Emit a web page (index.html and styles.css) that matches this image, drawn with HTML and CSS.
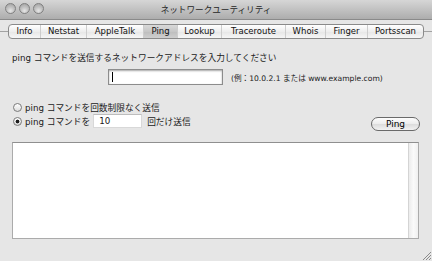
FILE: index.html
```html
<!DOCTYPE html>
<html lang="ja">
<head>
<meta charset="utf-8">
<title>ネットワークユーティリティ</title>
<link rel="stylesheet" href="styles.css">
</head>
<body>
<div class="window">
  <div class="titlebar">
    <div class="lights">
      <span class="light"></span><span class="light"></span><span class="light"></span>
    </div>
    <div class="title">ネットワークユーティリティ</div>
    <div></div>
  </div>
  <div class="tabrow">
    <div class="tabs">
      <div class="tab t-info">Info</div>
      <div class="tab t-netstat">Netstat</div>
      <div class="tab t-apple">AppleTalk</div>
      <div class="tab t-ping active">Ping</div>
      <div class="tab t-lookup">Lookup</div>
      <div class="tab t-trace">Traceroute</div>
      <div class="tab t-whois">Whois</div>
      <div class="tab t-finger">Finger</div>
      <div class="tab t-port">Portsscan</div>
    </div>
  </div>
  <div class="prompt">ping コマンドを送信するネットワークアドレスを入力してください</div>
  <div class="addr-row">
    <div class="addr"><span class="caret"></span></div>
    <div class="hint">(例：10.0.2.1 または www.example.com)</div>
  </div>
  <div class="options">
    <div class="radios">
      <div class="radio-row"><span class="radio"></span>ping コマンドを回数制限なく送信</div>
      <div class="radio-row"><span class="radio on"></span>ping コマンドを<span class="count">10</span>回だけ送信</div>
    </div>
    <div class="ping-btn">Ping</div>
  </div>
  <div class="output">
    <div class="scroll"></div>
  </div>
  <svg class="grip" width="9" height="9" viewBox="0 0 9 9">
    <path d="M1 9 L9 1 M4 9 L9 4 M7 9 L9 7" stroke="#8a8a8a" stroke-width="1"/>
  </svg>
</div>
</body>
</html>
```
FILE: styles.css
```css
* { box-sizing: border-box; }
body {
  margin: 0;
  width: 432px;
  height: 261px;
  overflow: hidden;
  background: #e6e6e6;
  font-family: "DejaVu Sans", "Noto Sans CJK JP", sans-serif;
  font-size: 8.7px;
  color: #1a1a1a;
}
.window {
  position: relative;
  height: 261px;
  display: flex;
  flex-direction: column;
}
.titlebar {
  flex: none;
  height: 20px;
  display: grid;
  grid-template-columns: 1fr auto 1fr;
  align-items: center;
  background: linear-gradient(#d6d6d6, #adadad);
  border-bottom: 1px solid #8a8a8a;
}
.lights {
  display: flex;
  gap: 3px;
  padding-left: 5px;
  padding-bottom: 2px;
}
.light {
  width: 11px;
  height: 11px;
  border-radius: 50%;
  border: 1px solid #808080;
  background: radial-gradient(circle at 50% 75%, #e6e6e6 0, #c2c2c2 45%, #9d9d9d 100%);
}
.title {
  font-family: "Noto Sans CJK JP", sans-serif;
  font-size: 8.6px;
  color: #262626;
  padding-bottom: 2px;
}
.tabrow {
  position: relative;
  margin-top: 4px;
  padding-left: 8px;
  height: 15px;
  display: flex;
}
.tabrow::before {
  content: "";
  position: absolute;
  left: 0;
  right: 0;
  top: 7px;
  height: 1px;
  background: #a2a2a2;
}
.tabs {
  position: relative;
  z-index: 1;
  display: flex;
  height: 15px;
  border: 1px solid #8a8a8a;
  border-radius: 4px;
  overflow: hidden;
  background: linear-gradient(#ffffff, #eeeeee 50%, #e6e6e6 51%, #f6f6f6);
}
.tab {
  font-size: 8.5px;
  line-height: 13px;
  text-align: center;
  color: #111;
  border-left: 1px solid #cdcdcd;
}
.tab:first-child { border-left: none; }
.tab.active { background: linear-gradient(#d9d9d9, #c6c6c6 50%, #bdbdbd 51%, #cfcfcf); }
.t-info { width: 31px; }
.t-netstat { width: 46px; }
.t-apple { width: 57px; }
.t-ping { width: 34px; }
.t-lookup { width: 44px; }
.t-trace { width: 64px; }
.t-whois { width: 40px; }
.t-finger { width: 42px; }
.t-port { width: 56px; }
.prompt {
  margin: 13px 0 0 12px;
  line-height: 12px;
}
.addr-row {
  display: flex;
  align-items: center;
  height: 16px;
  margin: 5px 0 0 108px;
}
.addr {
  width: 115px;
  height: 16px;
  background: #fff;
  border: 1px solid #8c8c8c;
  box-shadow: inset 0 1px 2px rgba(0, 0, 0, 0.35);
  display: flex;
  align-items: center;
}
.caret {
  width: 1px;
  height: 10px;
  margin-left: 3px;
  background: #000;
}
.hint {
  margin-left: 8px;
  font-size: 7.6px;
  color: #222;
}
.options {
  display: flex;
  justify-content: space-between;
  margin: 15px 12px 0 12px;
}
.radios {
  display: flex;
  flex-direction: column;
}
.radio-row {
  display: flex;
  align-items: center;
  height: 14px;
  white-space: nowrap;
}
.radio {
  width: 9px;
  height: 9px;
  margin: 0 3px 0 1px;
  border-radius: 50%;
  border: 1px solid #7a7a7a;
  background: linear-gradient(#ffffff, #dcdcdc);
}
.radio.on {
  background: radial-gradient(circle, #1e1e1e 0 1.6px, transparent 2.2px), linear-gradient(#ffffff, #d6d6d6);
}
.count {
  width: 49px;
  height: 14px;
  margin: 0 5px 0 3px;
  padding-left: 5px;
  line-height: 13px;
  background: #fff;
  border: 1px solid #d8d8d8;
  border-top-color: #bdbdbd;
}
.ping-btn {
  align-self: flex-start;
  margin-top: 17px;
  width: 49px;
  height: 14px;
  border: 1px solid #6a6a6a;
  border-radius: 7px;
  background: linear-gradient(#fdfdfd, #ececec 50%, #dcdcdc 51%, #f2f2f2);
  font-size: 9px;
  line-height: 12px;
  text-align: center;
  color: #000;
}
.output {
  margin: 11px 13px 0 12px;
  height: 97px;
  display: flex;
  justify-content: flex-end;
  background: #fff;
  border: 1px solid #ababab;
  border-top-color: #8f8f8f;
}
.scroll {
  width: 10px;
  border-left: 1px solid #d4d4d4;
  background: linear-gradient(to right, #ececec, #fafafa 50%, #f0f0f0);
}
.grip {
  position: absolute;
  right: 1px;
  bottom: 1px;
}
```
